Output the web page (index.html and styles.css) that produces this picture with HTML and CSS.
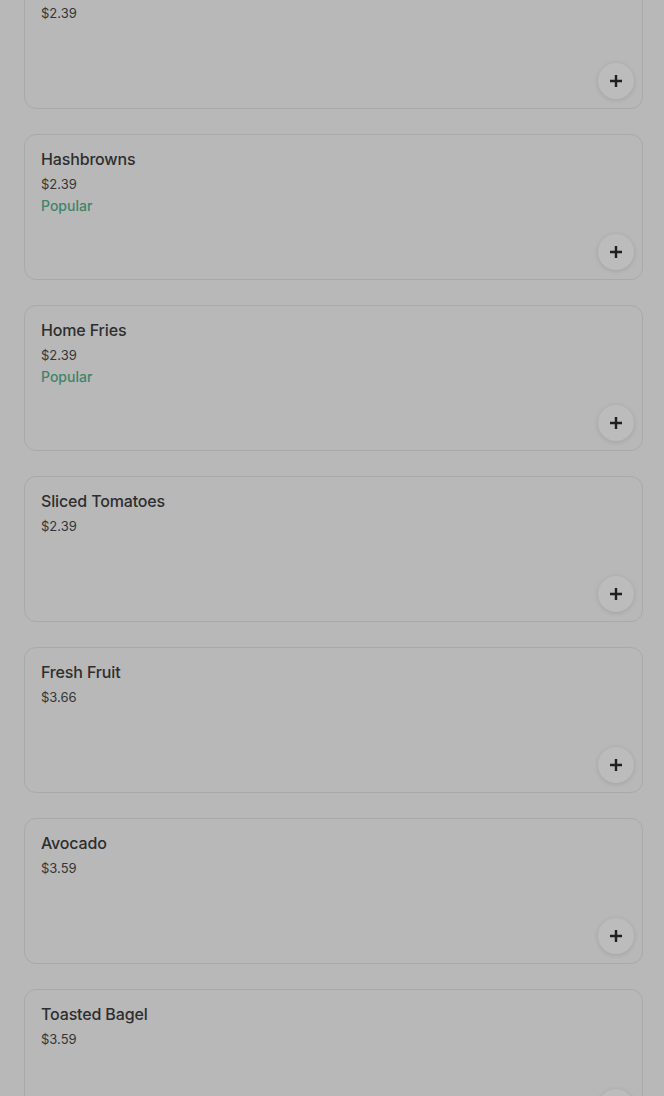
FILE: index.html
```html
<!DOCTYPE html>
<html>
<head>
    <title>Sides</title>
    <link rel="stylesheet" href="styles.css">
</head>
<body>
    <div class="menu-list">
        <div class="item-card item-card-top">
            <div class="item-price">$2.39</div>
            <button class="add-btn" aria-label="Add">
                <svg width="14" height="14" viewBox="0 0 14 14"><path d="M7 1v12M1 7h12" stroke="#1f1f1f" stroke-width="2.4"/></svg>
            </button>
        </div>
        <div class="item-card">
            <div class="item-name">Hashbrowns</div>
            <div class="item-price">$2.39</div>
            <div class="item-tag">Popular</div>
            <button class="add-btn" aria-label="Add">
                <svg width="14" height="14" viewBox="0 0 14 14"><path d="M7 1v12M1 7h12" stroke="#1f1f1f" stroke-width="2.4"/></svg>
            </button>
        </div>
        <div class="item-card">
            <div class="item-name">Home Fries</div>
            <div class="item-price">$2.39</div>
            <div class="item-tag">Popular</div>
            <button class="add-btn" aria-label="Add">
                <svg width="14" height="14" viewBox="0 0 14 14"><path d="M7 1v12M1 7h12" stroke="#1f1f1f" stroke-width="2.4"/></svg>
            </button>
        </div>
        <div class="item-card">
            <div class="item-name">Sliced Tomatoes</div>
            <div class="item-price">$2.39</div>
            <button class="add-btn" aria-label="Add">
                <svg width="14" height="14" viewBox="0 0 14 14"><path d="M7 1v12M1 7h12" stroke="#1f1f1f" stroke-width="2.4"/></svg>
            </button>
        </div>
        <div class="item-card">
            <div class="item-name">Fresh Fruit</div>
            <div class="item-price">$3.66</div>
            <button class="add-btn" aria-label="Add">
                <svg width="14" height="14" viewBox="0 0 14 14"><path d="M7 1v12M1 7h12" stroke="#1f1f1f" stroke-width="2.4"/></svg>
            </button>
        </div>
        <div class="item-card">
            <div class="item-name">Avocado</div>
            <div class="item-price">$3.59</div>
            <button class="add-btn" aria-label="Add">
                <svg width="14" height="14" viewBox="0 0 14 14"><path d="M7 1v12M1 7h12" stroke="#1f1f1f" stroke-width="2.4"/></svg>
            </button>
        </div>
        <div class="item-card">
            <div class="item-name">Toasted Bagel</div>
            <div class="item-price">$3.59</div>
            <button class="add-btn" aria-label="Add">
                <svg width="14" height="14" viewBox="0 0 14 14"><path d="M7 1v12M1 7h12" stroke="#1f1f1f" stroke-width="2.4"/></svg>
            </button>
        </div>
    </div>
</body>
</html>
```

FILE: styles.css
```css
/* Pagina (con fondo oscurecido) */
body {
    margin: 0;
    background-color: #b8b8b8;
    font-family: Inter, "Noto Sans", sans-serif;
    color: #2b2b2b;
    overflow: hidden;
}

/* Lista de productos */
.menu-list {
    display: flex;
    flex-direction: column;
    gap: 25px;
    margin-top: -37px;
    padding: 0 21px 0 24px;
}

.item-card {
    display: flex;
    flex-direction: column;
    height: 146px;
    box-sizing: border-box;
    padding: 14px 8px 9px 16px;
    border: 1px solid #a9a9a9;
    border-radius: 12px;
}

/* primera tarjeta, cortada por arriba */
.item-card-top {
    padding-top: 34px;
}

.item-name {
    font-size: 16px;
    line-height: 20px;
    font-weight: 500;
    letter-spacing: -0.15px;
    color: #2e2e2e;
}

.item-price {
    margin-top: 5px;
    font-size: 13px;
    line-height: 20px;
    color: #353535;
}

.item-tag {
    margin-top: 2px;
    font-size: 14px;
    line-height: 20px;
    font-weight: 500;
    color: #3f8469;
}

.add-btn {
    margin-top: auto;
    align-self: flex-end;
    width: 36px;
    height: 36px;
    padding: 0;
    border: none;
    border-radius: 50%;
    background-color: #bcbcbc;
    box-shadow: 0 1px 5px rgba(0, 0, 0, 0.12);
    display: flex;
    align-items: center;
    justify-content: center;
    cursor: pointer;
}
```
